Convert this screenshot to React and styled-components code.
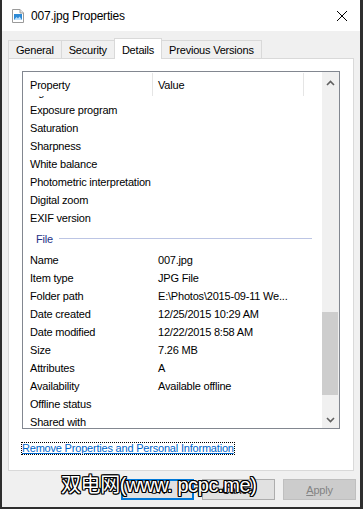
import React from 'react';
import styled, { createGlobalStyle } from 'styled-components';

const GlobalStyle = createGlobalStyle`
  html, body {
    margin: 0;
    padding: 0;
    background: #f0f0f0;
  }
  body {
    font-family: "Liberation Sans", Arial, sans-serif;
    font-size: 11px;
    letter-spacing: -0.2px;
    color: #000;
  }
`;

const Window = styled.div`
  position: relative;
  box-sizing: border-box;
  width: 363px;
  height: 509px;
  border-style: solid;
  border-color: #2e2e2e;
  border-width: 0 3px 2px 2px;
  background: #f0f0f0;
  display: flex;
  flex-direction: column;
  overflow: hidden;
`;

const TitleBar = styled.div`
  height: 31px;
  flex: none;
  background: #fff;
  display: flex;
  align-items: center;
  padding-left: 10px;
  padding-right: 13px;
`;

const Title = styled.div`
  flex: 1;
  margin-left: 7px;
  font-size: 12px;
  line-height: 14px;
  margin-top: 1px;
`;

const Body = styled.div`
  flex: 1;
  display: flex;
  flex-direction: column;
  padding: 7px 6px 7px 6px;
`;

const TabStrip = styled.div`
  display: flex;
  align-items: flex-end;
  height: 20px;
`;

const Tab = styled.div`
  position: relative;
  box-sizing: border-box;
  height: ${p => (p.$active ? '21px' : '18px')};
  margin-bottom: ${p => (p.$active ? '-1px' : '0')};
  margin-left: ${p => (p.$first ? '0' : '-1px')};
  z-index: ${p => (p.$active ? 1 : 0)};
  padding: ${p => (p.$active ? '2px 7px 0' : '0 7px')};
  border: 1px solid #d9d9d9;
  border-bottom: none;
  background: ${p => (p.$active ? '#fff' : '#f0f0f0')};
  display: flex;
  align-items: center;
  white-space: nowrap;
  line-height: 14px;
`;

const Panel = styled.div`
  box-sizing: border-box;
  height: 413px;
  background: #fff;
  border: 1px solid #d9d9d9;
  padding: 12px 0 0 13px;
  display: flex;
  flex-direction: column;
`;

const ListBox = styled.div`
  box-sizing: border-box;
  width: 318px;
  height: 358px;
  border: 1px solid #828790;
  display: flex;
`;

const ListMain = styled.div`
  flex: 1;
  display: flex;
  flex-direction: column;
  overflow: hidden;
`;

const Header = styled.div`
  display: grid;
  grid-template-columns: 130px 151px 1fr;
  height: 24px;
  flex: none;
`;

const HeaderCell = styled.div`
  display: flex;
  align-items: center;
  padding-left: ${p => p.$pad}px;
  margin-top: 1px;
  border-right: ${p => (p.$divider ? '1px solid #e5e5e5' : 'none')};
`;

const Rows = styled.div`
  flex: 1;
  overflow: hidden;
`;

const Row = styled.div`
  display: grid;
  grid-template-columns: 130px 1fr;
  height: 18px;
  line-height: 18px;
  white-space: nowrap;
  margin-top: ${p => (p.$clipped ? '-13px' : '0')};
`;

const Cell = styled.div`
  padding-left: ${p => p.$pad}px;
  overflow: hidden;
`;

const GroupRow = styled.div`
  height: 24px;
  display: flex;
  align-items: center;
  padding: 0 10px 0 13px;
  color: #1e3287;
  gap: 6px;
`;

const GroupLine = styled.div`
  flex: 1;
  height: 1px;
  background: #bcc5e4;
  margin-top: -1px;
`;

const ScrollBar = styled.div`
  width: 17px;
  flex: none;
  background: #f0f0f0;
  display: flex;
  flex-direction: column;
`;

const ScrollButton = styled.div`
  height: 17px;
  flex: none;
  display: flex;
  align-items: center;
  justify-content: center;
  padding-top: ${p => (p.$up ? '2px' : '0')};
`;

const Track = styled.div`
  flex: 1;
  display: flex;
  flex-direction: column;
`;

const Thumb = styled.div`
  width: 16px;
  background: #cdcdcd;
`;

const LinkRow = styled.div`
  margin-top: 13px;
`;

const Link = styled.span`
  display: inline-block;
  color: #0066cc;
  text-decoration: underline;
  line-height: 11px;
  outline: 1px dotted #000;
`;

const ButtonRow = styled.div`
  display: flex;
  justify-content: flex-end;
  gap: 8px;
  margin-top: 8px;
  margin-right: -2px;
`;

const Button = styled.div`
  box-sizing: border-box;
  width: 73px;
  height: 21px;
  display: flex;
  align-items: center;
  justify-content: center;
  background: ${p => (p.$disabled ? '#cccccc' : '#e1e1e1')};
  border: ${p =>
    p.$default ? '2px solid #0078d7' : p.$disabled ? '1px solid #bfbfbf' : '1px solid #adadad'};
  color: ${p => (p.$disabled ? '#838383' : '#000')};
`;

const Watermark = styled.div`
  position: absolute;
  left: 59px;
  top: 474px;
  font-family: "Liberation Sans", "Noto Sans CJK SC", sans-serif;
  font-size: 20px;
  line-height: 22px;
  font-weight: 400;
  letter-spacing: -0.4px;
  color: #fff;
  white-space: nowrap;
  text-shadow:
    1px 0 0 #000, -1px 0 0 #000, 0 1px 0 #000, 0 -1px 0 #000,
    1px 1px 0 #000, -1px -1px 0 #000, 1px -1px 0 #000, -1px 1px 0 #000;
  pointer-events: none;
`;

const FileIcon = () => (
  <svg width="12" height="14" viewBox="0 0 12 14">
    <path d="M0.5 0.5 H8 L11.5 4 V13.5 H0.5 Z" fill="#fff" stroke="#9a9a9a" />
    <path d="M8 0.5 V4 H11.5" fill="#e8e8e8" stroke="#9a9a9a" />
    <rect x="2" y="5" width="8" height="6" fill="#2d8ad6" />
    <path d="M2 11 L4.5 8 L6 9.5 L7.5 7.5 L10 11 Z" fill="#bfe0fa" />
  </svg>
);

const CloseIcon = () => (
  <svg width="10" height="10" viewBox="0 0 10 10">
    <path d="M0 0 L10 10 M10 0 L0 10" stroke="#000" strokeWidth="1" />
  </svg>
);

const Chevron = ({ up }) => (
  <svg width="9" height="6" viewBox="0 0 9 6">
    <path
      d={up ? 'M1 5 L4.5 1.5 L8 5' : 'M1 1 L4.5 4.5 L8 1'}
      fill="none"
      stroke="#606060"
      strokeWidth="1.6"
    />
  </svg>
);

const imageRows = [
  'Exposure program',
  'Saturation',
  'Sharpness',
  'White balance',
  'Photometric interpretation',
  'Digital zoom',
  'EXIF version',
];

const fileRows = [
  ['Name', '007.jpg'],
  ['Item type', 'JPG File'],
  ['Folder path', 'E:\\Photos\\2015-09-11 We...'],
  ['Date created', '12/25/2015 10:29 AM'],
  ['Date modified', '12/22/2015 8:58 AM'],
  ['Size', '7.26 MB'],
  ['Attributes', 'A'],
  ['Availability', 'Available offline'],
  ['Offline status', ''],
  ['Shared with', ''],
];

const tabs = ['General', 'Security', 'Details', 'Previous Versions'];

export default function App() {
  return (
    <>
      <GlobalStyle />
      <Window>
        <TitleBar>
          <FileIcon />
          <Title>007.jpg Properties</Title>
          <CloseIcon />
        </TitleBar>
        <Body>
          <TabStrip>
            {tabs.map((t, i) => (
              <Tab key={t} $first={i === 0} $active={t === 'Details'}>
                {t}
              </Tab>
            ))}
          </TabStrip>
          <Panel>
            <ListBox>
              <ListMain>
                <Header>
                  <HeaderCell $pad={7} $divider>Property</HeaderCell>
                  <HeaderCell $pad={5} $divider>Value</HeaderCell>
                  <HeaderCell />
                </Header>
                <Rows>
                  <Row $clipped>
                    <Cell $pad={7}>Light source</Cell>
                    <Cell $pad={5} />
                  </Row>
                  {imageRows.map(name => (
                    <Row key={name}>
                      <Cell $pad={7}>{name}</Cell>
                      <Cell $pad={5} />
                    </Row>
                  ))}
                  <GroupRow>
                    File
                    <GroupLine />
                  </GroupRow>
                  {fileRows.map(([name, value]) => (
                    <Row key={name}>
                      <Cell $pad={7}>{name}</Cell>
                      <Cell $pad={5}>{value}</Cell>
                    </Row>
                  ))}
                </Rows>
              </ListMain>
              <ScrollBar>
                <ScrollButton $up>
                  <Chevron up />
                </ScrollButton>
                <Track>
                  <Thumb style={{ marginTop: 221, height: 83 }} />
                </Track>
                <ScrollButton>
                  <Chevron />
                </ScrollButton>
              </ScrollBar>
            </ListBox>
            <LinkRow>
              <Link>Remove Properties and Personal Information</Link>
            </LinkRow>
          </Panel>
          <ButtonRow>
            <Button $default>OK</Button>
            <Button>Cancel</Button>
            <Button $disabled>
              <span>
                <u>A</u>pply
              </span>
            </Button>
          </ButtonRow>
        </Body>
        <Watermark>双电网(www. pcpc.me)</Watermark>
      </Window>
    </>
  );
}
